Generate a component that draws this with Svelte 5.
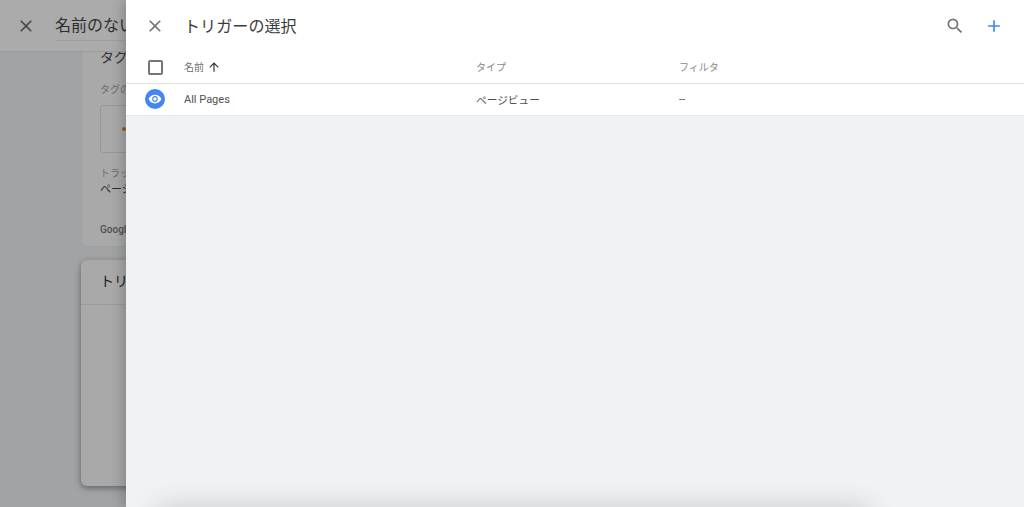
<script lang="ts">
  // Trigger picker sheet lying over the dimmed tag editor.
  const columns = { name: '名前', type: 'タイプ', filter: 'フィルタ' };
  const triggers = [{ name: 'All Pages', type: 'ページビュー', filter: '--' }];
</script>

<div class="page">
  <header class="page-header">
    <svg class="close" viewBox="0 0 24 24" width="20" height="20" aria-hidden="true">
      <path d="M19 6.41 17.59 5 12 10.59 6.41 5 5 6.41 10.59 12 5 17.59 6.41 19 12 13.41 17.59 19 19 17.59 13.41 12z" />
    </svg>
    <span class="tag-name">名前のないタグ</span>
  </header>

  <div class="cards">
    <section class="card tag-card">
      <h2>タグの設定</h2>
      <div class="muted first">タグの種類</div>
      <div class="tag-type"><i class="dot"></i></div>
      <div class="muted">トラッキング</div>
      <div class="value">ページビュー</div>
      <div class="goog">Google アナリティクス</div>
    </section>
    <section class="card trigger-card">
      <h2>トリガー</h2>
    </section>
  </div>
</div>

<aside class="sheet">
  <header class="sheet-header">
    <svg class="close" viewBox="0 0 24 24" width="20" height="20" aria-hidden="true">
      <path d="M19 6.41 17.59 5 12 10.59 6.41 5 5 6.41 10.59 12 5 17.59 6.41 19 12 13.41 17.59 19 19 17.59 13.41 12z" />
    </svg>
    <h1>トリガーの選択</h1>
    <svg class="search" viewBox="0 0 24 24" width="20" height="20" aria-hidden="true">
      <path d="M15.5 14h-.79l-.28-.27A6.47 6.47 0 0 0 16 9.5 6.5 6.5 0 1 0 9.5 16c1.61 0 3.09-.59 4.23-1.57l.27.28v.79l5 4.99L20.49 19l-4.99-5zm-6 0C7.01 14 5 11.99 5 9.5S7.01 5 9.5 5 14 7.01 14 9.5 11.99 14 9.5 14z" />
    </svg>
    <svg class="add" viewBox="0 0 24 24" width="20" height="20" aria-hidden="true">
      <path d="M19 13h-6v6h-2v-6H5v-2h6V5h2v6h6v2z" />
    </svg>
  </header>

  <div class="row head">
    <div class="cell-icon"><span class="checkbox"></span></div>
    <div class="col-name">
      {columns.name}
      <svg viewBox="0 0 24 24" width="14" height="14" aria-hidden="true">
        <path d="M4 12l1.41 1.41L11 7.83V20h2V7.83l5.58 5.59L20 12l-8-8-8 8z" />
      </svg>
    </div>
    <div class="col-type">{columns.type}</div>
    <div class="col-filter">{columns.filter}</div>
  </div>

  {#each triggers as trigger}
    <div class="row item">
      <div class="cell-icon">
        <span class="badge">
          <svg viewBox="0 0 24 24" width="14" height="14" aria-hidden="true">
            <path d="M12 4.5C7 4.5 2.73 7.61 1 12c1.73 4.39 6 7.5 11 7.5s9.27-3.11 11-7.5c-1.73-4.39-6-7.5-11-7.5zM12 17c-2.76 0-5-2.24-5-5s2.24-5 5-5 5 2.24 5 5-2.24 5-5 5zm0-8c-1.66 0-3 1.34-3 3s1.34 3 3 3 3-1.34 3-3-1.34-3-3-3z" />
          </svg>
        </span>
      </div>
      <div class="col-name">{trigger.name}</div>
      <div class="col-type">{trigger.type}</div>
      <div class="col-filter">{trigger.filter}</div>
    </div>
  {/each}

  <div class="footer-bar"></div>
</aside>

<style>
  :global(body) {
    margin: 0;
    overflow: hidden;
    background: #a1a3a5;
    font-family: "Roboto", "Noto Sans CJK JP", sans-serif;
  }

  .page {
    height: 507px;
    overflow: hidden;
    background: #a1a3a5;
  }

  .page-header {
    height: 51px;
    display: flex;
    align-items: center;
    background: #ababab;
    border-bottom: 1px solid #9b9b9b;
    padding-left: 16px;
    position: relative;
    z-index: 1;
  }

  .page-header .close {
    fill: #4a4a4a;
  }

  .tag-name {
    margin-left: 19px;
    margin-top: 1px;
    font-size: 16px;
    line-height: 28px;
    color: #2e2e2e;
    border-bottom: 1px solid #9f9f9f;
    white-space: nowrap;
  }

  .cards {
    margin-left: 81px;
    width: 400px;
    margin-top: -10px;
  }

  .card {
    background: #a9a9a9;
    box-sizing: border-box;
    border-radius: 0 0 6px 6px;
  }

  .tag-card {
    height: 205px;
    padding: 5px 18px 0;
    border: 1px solid #9e9e9e;
    border-top: 0;
  }

  .tag-card h2 {
    margin: 0;
    font-size: 14px;
    line-height: 20px;
    font-weight: 400;
    color: #333;
  }

  .muted {
    font-size: 10px;
    line-height: 14px;
    color: #6d6d6d;
    margin-top: 14px;
  }

  .muted.first {
    margin-top: 16px;
  }

  .tag-type {
    width: 300px;
    height: 46px;
    margin-top: 8px;
    border: 1px solid #979797;
    border-radius: 3px;
    display: flex;
    align-items: center;
    padding-left: 21px;
  }

  .dot {
    width: 4px;
    height: 4px;
    border-radius: 50%;
    background: #a85a14;
  }

  .muted + .value {
    margin-top: 1px;
    font-size: 11px;
    line-height: 15px;
    color: #2e2e2e;
  }

  .goog {
    margin-top: 26px;
    font-size: 10px;
    line-height: 14px;
    font-weight: 500;
    color: #505050;
  }

  .trigger-card {
    margin-top: 13px;
    height: 226px;
    border-radius: 6px;
    box-shadow: 0 2px 6px rgba(0, 0, 0, 0.4);
  }

  .trigger-card h2 {
    margin: 0;
    height: 44px;
    padding-left: 19px;
    border-bottom: 1px solid #9c9c9c;
    font-size: 14px;
    line-height: 42px;
    font-weight: 400;
    color: #222;
  }

  .sheet {
    position: fixed;
    left: 126px;
    right: 0;
    top: 0;
    bottom: 0;
    z-index: 2;
    background: #f1f2f4;
    box-shadow: -3px 0 12px rgba(0, 0, 0, 0.22);
    overflow: hidden;
  }

  .sheet-header {
    height: 51px;
    display: flex;
    align-items: center;
    background: #fff;
    padding: 0 20px 0 19px;
  }

  .sheet-header .close {
    fill: #757575;
  }

  h1 {
    flex: 1;
    margin: 0 0 1px 19px;
    font-size: 16px;
    letter-spacing: 0.1px;
    font-weight: 400;
    color: #3c3c3c;
  }

  .search {
    fill: #757575;
    margin-right: 19px;
  }

  .add {
    fill: #4285f4;
  }

  .row {
    display: flex;
    align-items: center;
    background: #fff;
    font-size: 10px;
  }

  .head {
    height: 32px;
    color: #8a8a8a;
    border-bottom: 1px solid #e2e2e2;
  }

  .head .col-type,
  .head .col-filter,
  .head .col-name {
    padding-bottom: 1px;
  }

  .item {
    box-sizing: border-box;
    height: 32px;
    padding-bottom: 2px;
    font-size: 11px;
    color: #505050;
    border-bottom: 1px solid #e4e5e7;
  }

  .item .col-name,
  .item .col-type,
  .item .col-filter {
    padding-top: 2px;
  }

  .cell-icon {
    width: 58px;
    display: flex;
    justify-content: center;
    flex-shrink: 0;
  }

  .col-name {
    width: 292px;
    display: flex;
    align-items: center;
    gap: 3px;
    flex-shrink: 0;
  }

  .head .col-name {
    color: #6f6f6f;
  }

  .col-name svg {
    fill: #333;
  }

  .item .col-type {
    font-size: 10.7px;
  }

  .col-type {
    width: 203px;
    flex-shrink: 0;
  }

  .checkbox {
    box-sizing: border-box;
    width: 15px;
    height: 15px;
    border: 2px solid #757575;
    border-radius: 2px;
  }

  .badge {
    width: 20px;
    height: 20px;
    border-radius: 50%;
    background: #4285f4;
    display: flex;
    align-items: center;
    justify-content: center;
  }

  .badge svg {
    fill: #fff;
  }

  .footer-bar {
    position: absolute;
    left: 30px;
    right: 154px;
    bottom: -30px;
    height: 30px;
    border-radius: 4px;
    box-shadow: 0 0 28px rgba(0, 0, 0, 0.16);
  }
</style>
